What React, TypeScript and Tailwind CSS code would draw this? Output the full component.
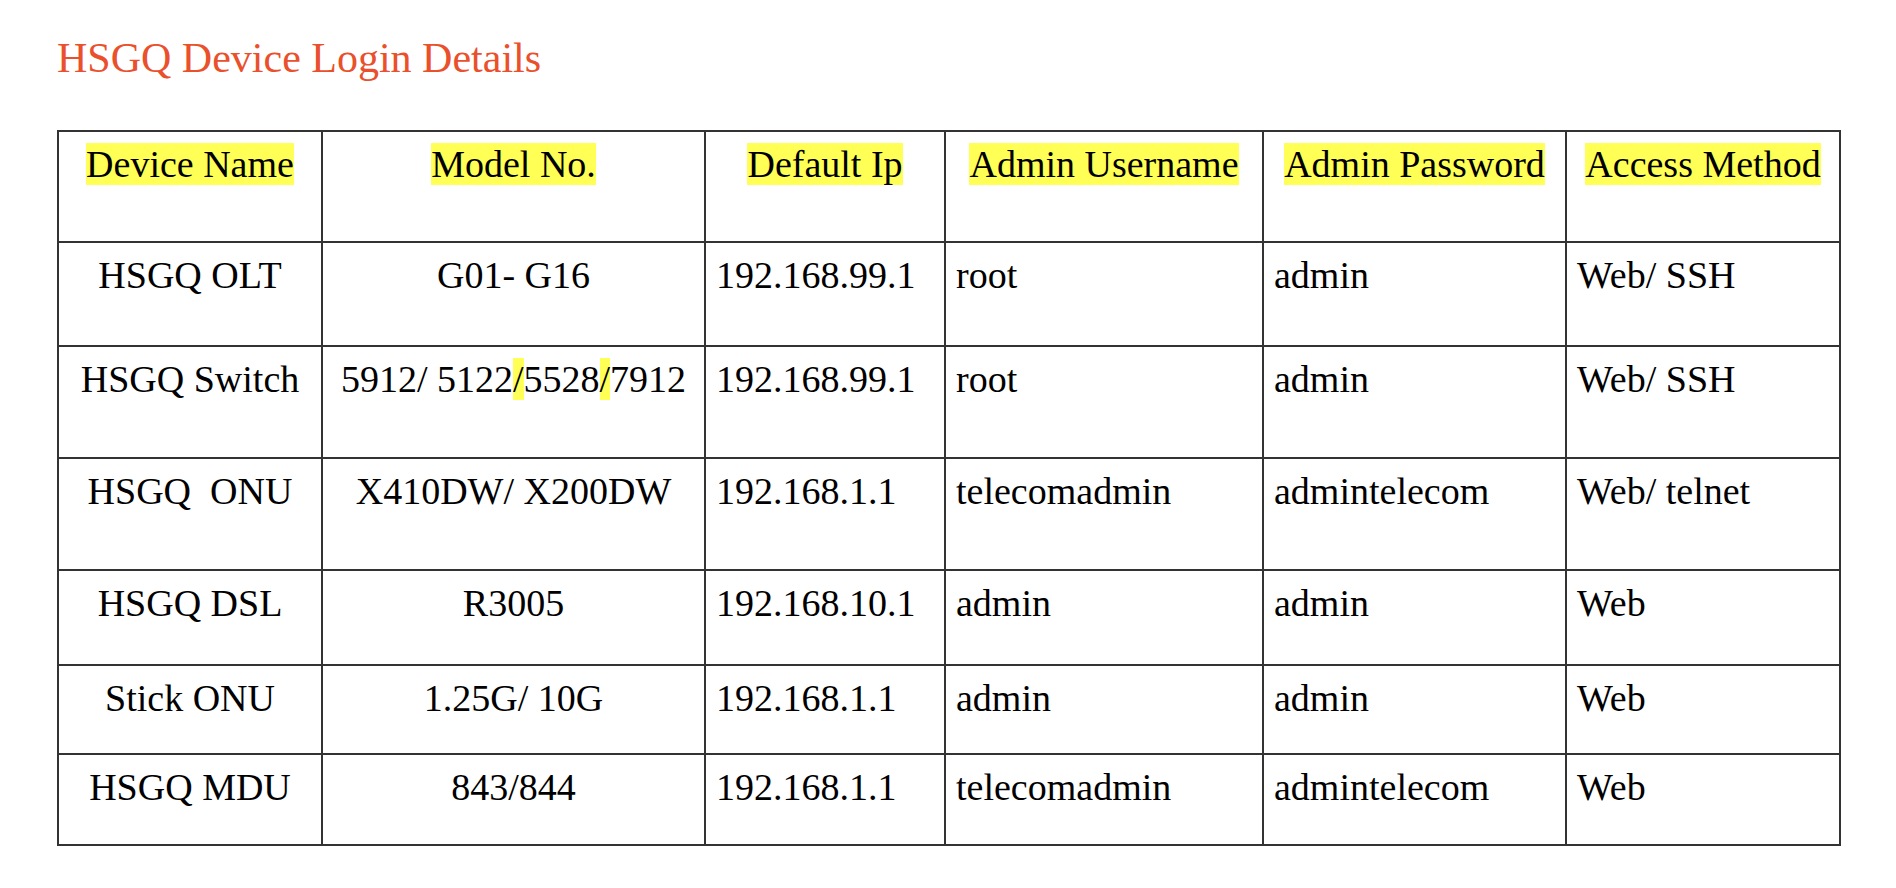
import React from "react";

type Row = {
  name: string;
  model: React.ReactNode;
  ip: string;
  user: string;
  pass: string;
  access: string;
  h: string;
};

const HL = ({ children }: { children: React.ReactNode }) => (
  <span className="bg-[#ffff55]">{children}</span>
);

const rows: Row[] = [
  { name: "HSGQ OLT", model: "G01- G16", ip: "192.168.99.1", user: "root", pass: "admin", access: "Web/ SSH", h: "h-[104px]" },
  {
    name: "HSGQ Switch",
    model: (
      <>
        5912/ 5122<HL>/</HL>5528<HL>/</HL>7912
      </>
    ),
    ip: "192.168.99.1",
    user: "root",
    pass: "admin",
    access: "Web/ SSH",
    h: "h-[112px]",
  },
  { name: "HSGQ\u00a0 ONU", model: "X410DW/ X200DW", ip: "192.168.1.1", user: "telecomadmin", pass: "admintelecom", access: "Web/ telnet", h: "h-[112px]" },
  { name: "HSGQ DSL", model: "R3005", ip: "192.168.10.1", user: "admin", pass: "admin", access: "Web", h: "h-[95px]" },
  { name: "Stick ONU", model: "1.25G/ 10G", ip: "192.168.1.1", user: "admin", pass: "admin", access: "Web", h: "h-[89px]" },
  { name: "HSGQ MDU", model: "843/844", ip: "192.168.1.1", user: "telecomadmin", pass: "admintelecom", access: "Web", h: "h-[91px]" },
];

const cell = "border-2 border-[#333] align-top pt-[10px] leading-[44px] whitespace-nowrap";

export default function App() {
  return (
    <div
      className="min-h-[888px] w-[1896px] bg-white pl-[57px] pt-[34px] text-black"
      style={{ fontFamily: '"Liberation Serif", "Times New Roman", serif' }}
    >
      <h1 className="text-[42px] leading-[48px] font-normal text-[#e9502b]">
        HSGQ Device Login Details
      </h1>
      <table className="mt-[48px] border-collapse table-fixed w-[1782px] text-[38px]">
        <colgroup>
          <col className="w-[264px]" />
          <col className="w-[383px]" />
          <col className="w-[240px]" />
          <col className="w-[318px]" />
          <col className="w-[303px]" />
          <col className="w-[274px]" />
        </colgroup>
        <thead>
          <tr className="h-[111px]">
            {["Device Name", "Model No.", "Default Ip", "Admin Username", "Admin Password", "Access Method"].map((t) => (
              <th key={t} className={`${cell} font-normal text-center`}>
                <HL>{t}</HL>
              </th>
            ))}
          </tr>
        </thead>
        <tbody>
          {rows.map((r, i) => (
            <tr key={i} className={r.h}>
              <td className={`${cell} text-center`}>{r.name}</td>
              <td className={`${cell} text-center`}>{r.model}</td>
              <td className={`${cell} text-left pl-[10px]`}>{r.ip}</td>
              <td className={`${cell} text-left pl-[10px]`}>{r.user}</td>
              <td className={`${cell} text-left pl-[10px]`}>{r.pass}</td>
              <td className={`${cell} text-left pl-[10px]`}>{r.access}</td>
            </tr>
          ))}
        </tbody>
      </table>
    </div>
  );
}
